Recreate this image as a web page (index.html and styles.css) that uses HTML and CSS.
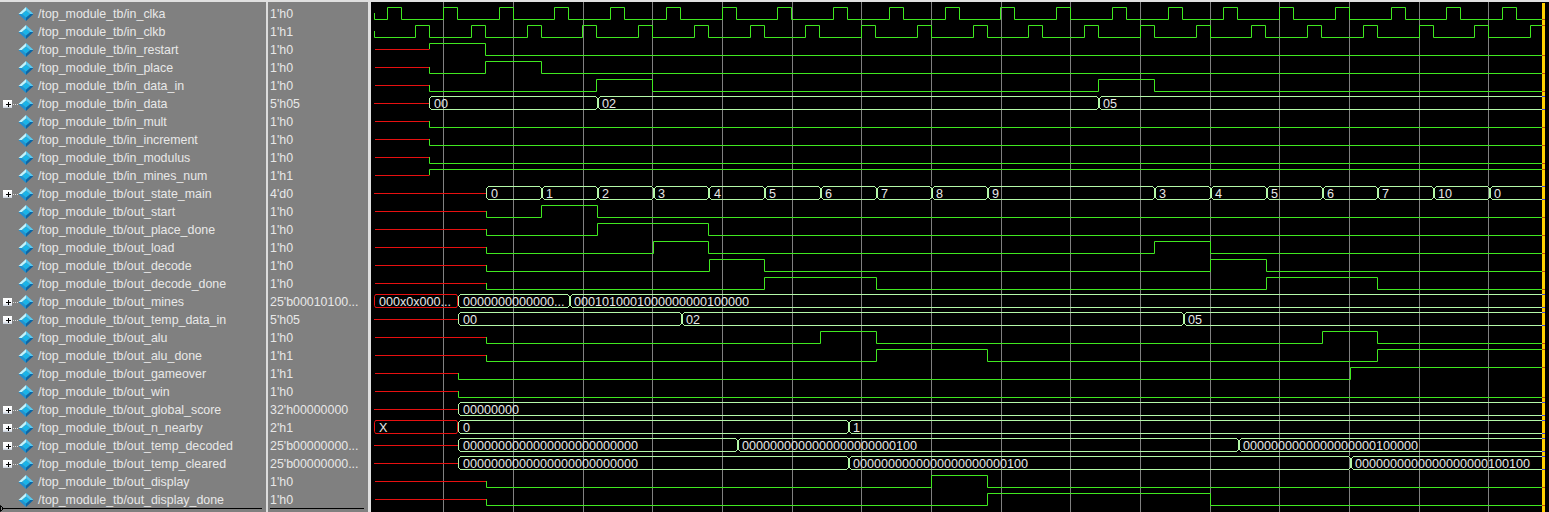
FILE: index.html
```html
<!DOCTYPE html>
<html lang="en">
<head>
<meta charset="utf-8">
<title>Wave - top_module_tb</title>
<link rel="stylesheet" href="styles.css">
</head>
<body>
<svg class="defs" width="0" height="0" aria-hidden="true">
  <defs>
    <linearGradient id="boxfill" x1="0" y1="0" x2="0" y2="1">
      <stop offset="0" stop-color="#ffffff"/>
      <stop offset="0.7" stop-color="#f4f6fa"/>
      <stop offset="1" stop-color="#c4ccd8"/>
    </linearGradient>
    <symbol id="ic-sig" viewBox="0 0 30 18">
      <polygon points="23,2 30.5,9 27,9 23,5.5" fill="#58c8f0"/>
      <polygon points="23,2 15.5,9 19,9 23,5.5" fill="#c0f4ff"/>
      <polygon points="23,16 30.5,9 27,9 23,12.5" fill="#0a66a6"/>
      <polygon points="23,16 15.5,9 19,9 23,12.5" fill="#1c92d4"/>
      <polygon points="23,5.5 27,9 23,12.5 19,9" fill="#1ab4e8"/>
    </symbol>
    <symbol id="ic-plus" viewBox="0 0 30 18">
      <rect x="0" y="5" width="9" height="8" fill="url(#boxfill)"/>
      <path d="M3 9.5H8M5.5 7V12" fill="none" stroke="#000"/>
      <path d="M10 9.5H15" fill="none" stroke="#d8d8d8" stroke-dasharray="1 1"/>
      <use href="#ic-sig" width="30" height="18"/>
    </symbol>
    <g id="tk">
      <rect x="-1" y="-8" width="4" height="1" fill="#000" stroke="none"/>
      <rect x="-1" y="5" width="4" height="1" fill="#000" stroke="none"/>
      <path d="M-.5 -7V-6M.5 -6V4M-.5 4V5M1.5 -6V4M2.5 -7V-6M2.5 4V5"/>
    </g>
    <g id="ts">
      <rect x="-1" y="-8" width="3" height="1" fill="#000" stroke="none"/>
      <rect x="-1" y="5" width="3" height="1" fill="#000" stroke="none"/>
      <path d="M.5 -6V4M1.5 -7V-6M1.5 4V5"/>
    </g>
  </defs>
</svg>
<main class="app">
  <section class="panel names">
    <div class="row"><svg class="ic"><use href="#ic-sig"/></svg><span class="name">/top_module_tb/in_clka</span></div>
    <div class="row"><svg class="ic"><use href="#ic-sig"/></svg><span class="name">/top_module_tb/in_clkb</span></div>
    <div class="row"><svg class="ic"><use href="#ic-sig"/></svg><span class="name">/top_module_tb/in_restart</span></div>
    <div class="row"><svg class="ic"><use href="#ic-sig"/></svg><span class="name">/top_module_tb/in_place</span></div>
    <div class="row"><svg class="ic"><use href="#ic-sig"/></svg><span class="name">/top_module_tb/in_data_in</span></div>
    <div class="row"><svg class="ic"><use href="#ic-plus"/></svg><span class="name">/top_module_tb/in_data</span></div>
    <div class="row"><svg class="ic"><use href="#ic-sig"/></svg><span class="name">/top_module_tb/in_mult</span></div>
    <div class="row"><svg class="ic"><use href="#ic-sig"/></svg><span class="name">/top_module_tb/in_increment</span></div>
    <div class="row"><svg class="ic"><use href="#ic-sig"/></svg><span class="name">/top_module_tb/in_modulus</span></div>
    <div class="row"><svg class="ic"><use href="#ic-sig"/></svg><span class="name">/top_module_tb/in_mines_num</span></div>
    <div class="row"><svg class="ic"><use href="#ic-plus"/></svg><span class="name">/top_module_tb/out_state_main</span></div>
    <div class="row"><svg class="ic"><use href="#ic-sig"/></svg><span class="name">/top_module_tb/out_start</span></div>
    <div class="row"><svg class="ic"><use href="#ic-sig"/></svg><span class="name">/top_module_tb/out_place_done</span></div>
    <div class="row"><svg class="ic"><use href="#ic-sig"/></svg><span class="name">/top_module_tb/out_load</span></div>
    <div class="row"><svg class="ic"><use href="#ic-sig"/></svg><span class="name">/top_module_tb/out_decode</span></div>
    <div class="row"><svg class="ic"><use href="#ic-sig"/></svg><span class="name">/top_module_tb/out_decode_done</span></div>
    <div class="row"><svg class="ic"><use href="#ic-plus"/></svg><span class="name">/top_module_tb/out_mines</span></div>
    <div class="row"><svg class="ic"><use href="#ic-plus"/></svg><span class="name">/top_module_tb/out_temp_data_in</span></div>
    <div class="row"><svg class="ic"><use href="#ic-sig"/></svg><span class="name">/top_module_tb/out_alu</span></div>
    <div class="row"><svg class="ic"><use href="#ic-sig"/></svg><span class="name">/top_module_tb/out_alu_done</span></div>
    <div class="row"><svg class="ic"><use href="#ic-sig"/></svg><span class="name">/top_module_tb/out_gameover</span></div>
    <div class="row"><svg class="ic"><use href="#ic-sig"/></svg><span class="name">/top_module_tb/out_win</span></div>
    <div class="row"><svg class="ic"><use href="#ic-plus"/></svg><span class="name">/top_module_tb/out_global_score</span></div>
    <div class="row"><svg class="ic"><use href="#ic-plus"/></svg><span class="name">/top_module_tb/out_n_nearby</span></div>
    <div class="row"><svg class="ic"><use href="#ic-plus"/></svg><span class="name">/top_module_tb/out_temp_decoded</span></div>
    <div class="row"><svg class="ic"><use href="#ic-plus"/></svg><span class="name">/top_module_tb/out_temp_cleared</span></div>
    <div class="row"><svg class="ic"><use href="#ic-sig"/></svg><span class="name">/top_module_tb/out_display</span></div>
    <div class="row"><svg class="ic"><use href="#ic-sig"/></svg><span class="name">/top_module_tb/out_display_done</span></div>
    <svg class="mark" width="4" height="7" viewBox="0 0 4 7"><path d="M.5 .5L3.5 3.5L.5 6.5Z" fill="#808080" stroke="#000"/></svg>
  </section>
  <section class="panel values">
    <div class="row">1'h0</div>
    <div class="row">1'h1</div>
    <div class="row">1'h0</div>
    <div class="row">1'h0</div>
    <div class="row">1'h0</div>
    <div class="row">5'h05</div>
    <div class="row">1'h0</div>
    <div class="row">1'h0</div>
    <div class="row">1'h0</div>
    <div class="row">1'h1</div>
    <div class="row">4'd0</div>
    <div class="row">1'h0</div>
    <div class="row">1'h0</div>
    <div class="row">1'h0</div>
    <div class="row">1'h0</div>
    <div class="row">1'h0</div>
    <div class="row">25'b00010100...</div>
    <div class="row">5'h05</div>
    <div class="row">1'h0</div>
    <div class="row">1'h1</div>
    <div class="row">1'h1</div>
    <div class="row">1'h0</div>
    <div class="row">32'h00000000</div>
    <div class="row">2'h1</div>
    <div class="row">25'b00000000...</div>
    <div class="row">25'b00000000...</div>
    <div class="row">1'h0</div>
    <div class="row">1'h0</div>
  </section>
  <section class="waves">
    <svg class="plot" width="1178" height="510" viewBox="371 2 1178 510">
      <path class="grid" d="M443.5 2V512M513.5 2V512M583.5 2V512M652.5 2V512M722.5 2V512M792.5 2V512M861.5 2V512M931.5 2V512M1001.5 2V512M1070.5 2V512M1140.5 2V512M1210.5 2V512M1279.5 2V512M1349.5 2V512M1419.5 2V512M1488.5 2V512"/>

      <path class="x" d="M375 49.5H429.5M375 67.5H429.5M375 85.5H429.5M374 103.5H429M375 121.5H429.5M375 139.5H429.5M375 157.5H429.5M375 175.5H429.5M374 193.5H486M375 211.5H486.5M375 229.5H486.5M375 247.5H486.5M375 265.5H486.5M375 283.5H486.5M374 319.5H458M375 337.5H486.5M375 355.5H486.5M375 373.5H458.5M375 391.5H458.5M374 409.5H458M374 445.5H458M374 463.5H458M375 481.5H486.5M375 499.5H486.5"/>
      <path class="x" d="M375.5 294.5L374.5 296.5V305.5L375.5 307.5H456.5L457.5 305.5V296.5L456.5 294.5ZM375.5 420.5L374.5 422.5V431.5L375.5 433.5H456.5L457.5 431.5V422.5L456.5 420.5Z"/>

      <path class="logic" d="M374.5 13V19.5H387.5V7.5H401.5V19.5H443.5V7.5H457.5V19.5H499.5V7.5H513.5V19.5H554.5V7.5H568.5V19.5H610.5V7.5H624.5V19.5H666.5V7.5H680.5V19.5H722.5V7.5H736.5V19.5H777.5V7.5H791.5V19.5H833.5V7.5H847.5V19.5H889.5V7.5H903.5V19.5H945.5V7.5H959.5V19.5H1000.5V7.5H1014.5V19.5H1056.5V7.5H1070.5V19.5H1112.5V7.5H1126.5V19.5H1168.5V7.5H1182.5V19.5H1223.5V7.5H1237.5V19.5H1279.5V7.5H1293.5V19.5H1335.5V7.5H1349.5V19.5H1391.5V7.5H1405.5V19.5H1446.5V7.5H1460.5V19.5H1502.5V7.5H1516.5V19.5H1542"/>
      <path class="logic" d="M374.5 31V37.5H415.5V25.5H429.5V37.5H471.5V25.5H485.5V37.5H527.5V25.5H541.5V37.5H582.5V25.5H596.5V37.5H638.5V25.5H652.5V37.5H694.5V25.5H708.5V37.5H750.5V25.5H764.5V37.5H805.5V25.5H819.5V37.5H861.5V25.5H875.5V37.5H917.5V25.5H931.5V37.5H973.5V25.5H987.5V37.5H1028.5V25.5H1042.5V37.5H1084.5V25.5H1098.5V37.5H1140.5V25.5H1154.5V37.5H1196.5V25.5H1210.5V37.5H1251.5V25.5H1265.5V37.5H1307.5V25.5H1321.5V37.5H1363.5V25.5H1377.5V37.5H1419.5V25.5H1433.5V37.5H1474.5V25.5H1488.5V37.5H1530.5V25.5H1542"/>
      <path class="logic" d="M429.5 49V43.5H485.5V55.5H1542"/>
      <path class="logic" d="M429.5 67V73.5H485.5V61.5H541.5V73.5H1542"/>
      <path class="logic" d="M429.5 85V91.5H596.5V79.5H652.5V91.5H1098.5V79.5H1154.5V91.5H1542"/>
      <path class="logic" d="M429.5 121V127.5H1542"/>
      <path class="logic" d="M429.5 139V145.5H1542"/>
      <path class="logic" d="M429.5 157V163.5H1542"/>
      <path class="logic" d="M429.5 175V169.5H1542"/>
      <path class="logic" d="M486.5 211V217.5H541.5V205.5H597.5V217.5H1542"/>
      <path class="logic" d="M486.5 229V235.5H597.5V223.5H708.5V235.5H1542"/>
      <path class="logic" d="M486.5 247V253.5H653.5V241.5H708.5V253.5H1154.5V241.5H1210.5V253.5H1542"/>
      <path class="logic" d="M486.5 265V271.5H709.5V259.5H764.5V271.5H1210.5V259.5H1266.5V271.5H1542"/>
      <path class="logic" d="M486.5 283V289.5H764.5V277.5H876.5V289.5H1266.5V277.5H1377.5V289.5H1542"/>
      <path class="logic" d="M486.5 337V343.5H820.5V331.5H876.5V343.5H1322.5V331.5H1377.5V343.5H1542"/>
      <path class="logic" d="M486.5 355V361.5H876.5V349.5H987.5V361.5H1377.5V349.5H1542"/>
      <path class="logic" d="M458.5 373V379.5H1350.5V367.5H1542"/>
      <path class="logic" d="M458.5 391V397.5H1542"/>
      <path class="logic" d="M486.5 481V487.5H931.5V475.5H987.5V487.5H1542"/>
      <path class="logic" d="M486.5 499V505.5H987.5V493.5H1210.5V505.5H1542"/>

      <path class="bus" d="M431 96.5H1542M431 109.5H1542M488 186.5H1542M488 199.5H1542M460 294.5H1542M460 307.5H1542M460 312.5H1542M460 325.5H1542M460 402.5H1542M460 415.5H1542M460 420.5H1542M460 433.5H1542M460 438.5H1542M460 451.5H1542M460 456.5H1542M460 469.5H1542"/>
      <g class="bus">
        <use href="#ts" x="429" y="104"/><use href="#tk" x="597" y="104"/><use href="#tk" x="1098" y="104"/>
        <use href="#ts" x="486" y="194"/><use href="#tk" x="541" y="194"/><use href="#tk" x="597" y="194"/><use href="#tk" x="653" y="194"/><use href="#tk" x="708" y="194"/><use href="#tk" x="764" y="194"/><use href="#tk" x="820" y="194"/><use href="#tk" x="876" y="194"/><use href="#tk" x="931" y="194"/><use href="#tk" x="987" y="194"/><use href="#tk" x="1154" y="194"/><use href="#tk" x="1210" y="194"/><use href="#tk" x="1266" y="194"/><use href="#tk" x="1322" y="194"/><use href="#tk" x="1377" y="194"/><use href="#tk" x="1433" y="194"/><use href="#tk" x="1489" y="194"/>
        <use href="#ts" x="458" y="302"/><use href="#tk" x="569" y="302"/>
        <use href="#ts" x="458" y="320"/><use href="#tk" x="681" y="320"/><use href="#tk" x="1183" y="320"/>
        <use href="#ts" x="458" y="410"/>
        <use href="#ts" x="458" y="428"/><use href="#tk" x="848" y="428"/>
        <use href="#ts" x="458" y="446"/><use href="#tk" x="737" y="446"/><use href="#tk" x="1238" y="446"/>
        <use href="#ts" x="458" y="464"/><use href="#tk" x="848" y="464"/><use href="#tk" x="1350" y="464"/>
      </g>

      <g class="lbl">
        <text x="434" y="108">00</text><text x="602" y="108">02</text><text x="1103" y="108">05</text>
        <text x="491" y="198">0</text><text x="546" y="198">1</text><text x="602" y="198">2</text><text x="658" y="198">3</text><text x="714" y="198">4</text><text x="769" y="198">5</text><text x="825" y="198">6</text><text x="881" y="198">7</text><text x="936" y="198">8</text><text x="992" y="198">9</text><text x="1159" y="198">3</text><text x="1215" y="198">4</text><text x="1271" y="198">5</text><text x="1327" y="198">6</text><text x="1382" y="198">7</text><text x="1438" y="198">10</text><text x="1494" y="198">0</text>
        <text x="379" y="306">000x0x000...</text><text x="463" y="306">0000000000000...</text><text x="574" y="306">0001010001000000000100000</text>
        <text x="463" y="324">00</text><text x="686" y="324">02</text><text x="1188" y="324">05</text>
        <text x="463" y="414">00000000</text>
        <text x="379" y="432">X</text><text x="463" y="432">0</text><text x="853" y="432">1</text>
        <text x="463" y="450">0000000000000000000000000</text><text x="742" y="450">0000000000000000000000100</text><text x="1243" y="450">0000000000000000000100000</text>
        <text x="463" y="468">0000000000000000000000000</text><text x="853" y="468">0000000000000000000000100</text><text x="1355" y="468">0000000000000000000100100</text>
      </g>

      <rect class="cursor" x="1542" y="3" width="3" height="509"/>
      <path class="tick-logic" d="M1542 19.5h3M1542 25.5h3M1542 55.5h3M1542 73.5h3M1542 91.5h3M1542 127.5h3M1542 145.5h3M1542 163.5h3M1542 169.5h3M1542 217.5h3M1542 235.5h3M1542 253.5h3M1542 271.5h3M1542 289.5h3M1542 343.5h3M1542 349.5h3M1542 367.5h3M1542 397.5h3M1542 487.5h3M1542 505.5h3"/>
      <path class="tick-bus" d="M1542 96.5h3M1542 109.5h3M1542 186.5h3M1542 199.5h3M1542 294.5h3M1542 307.5h3M1542 312.5h3M1542 325.5h3M1542 402.5h3M1542 415.5h3M1542 420.5h3M1542 433.5h3M1542 438.5h3M1542 451.5h3M1542 456.5h3M1542 469.5h3"/>
    </svg>
  </section>
</main>
</body>
</html>
```

FILE: styles.css
```css
html, body {
  margin: 0;
  padding: 0;
  background: #000;
}

body {
  width: 1549px;
  height: 512px;
  overflow: hidden;
}

.defs {
  display: block;
  height: 0;
}

.app {
  display: flex;
  height: 510px;
  border-top: 2px solid #e0e0e0;
  font-family: "Liberation Sans", Arial, sans-serif;
}

.panel {
  position: relative;
  box-sizing: border-box;
  height: 510px;
  padding-top: 3px;
  background: #808080;
  color: #e8e8e8;
  font-size: 12.4px;
  overflow: hidden;
}

.panel::after {
  content: "";
  position: absolute;
  left: 2px;
  right: 4px;
  bottom: 3px;
  height: 1px;
  background: #000;
}

.names {
  flex: 0 0 268px;
  padding-left: 3px;
  border-right: 2px solid #dcdcdc;
}

.values {
  flex: 0 0 103px;
  padding-left: 2px;
  border-right: 3px solid #e0e0e0;
}

.row {
  display: flex;
  align-items: center;
  height: 18px;
  white-space: nowrap;
}

.ic {
  flex: 0 0 30px;
  width: 30px;
  height: 18px;
  margin-right: 5px;
}

.mark {
  position: absolute;
  left: 0;
  bottom: 0;
}

.waves {
  flex: 1 1 auto;
  min-width: 0;
}

.plot {
  display: block;
  background: #000;
}

.plot path,
.plot use {
  fill: none;
}

.grid {
  stroke: #808080;
}

.logic {
  stroke: #40e820;
}

.bus {
  stroke: #b4f8a8;
}

.x {
  stroke: #e81010;
}

.lbl {
  font-size: 12.6px;
  fill: #e8e8e8;
  stroke: none;
}

.cursor {
  fill: #ffd000;
}

.tick-logic {
  stroke: #c84810;
}

.tick-bus {
  stroke: #4848e0;
}
```
